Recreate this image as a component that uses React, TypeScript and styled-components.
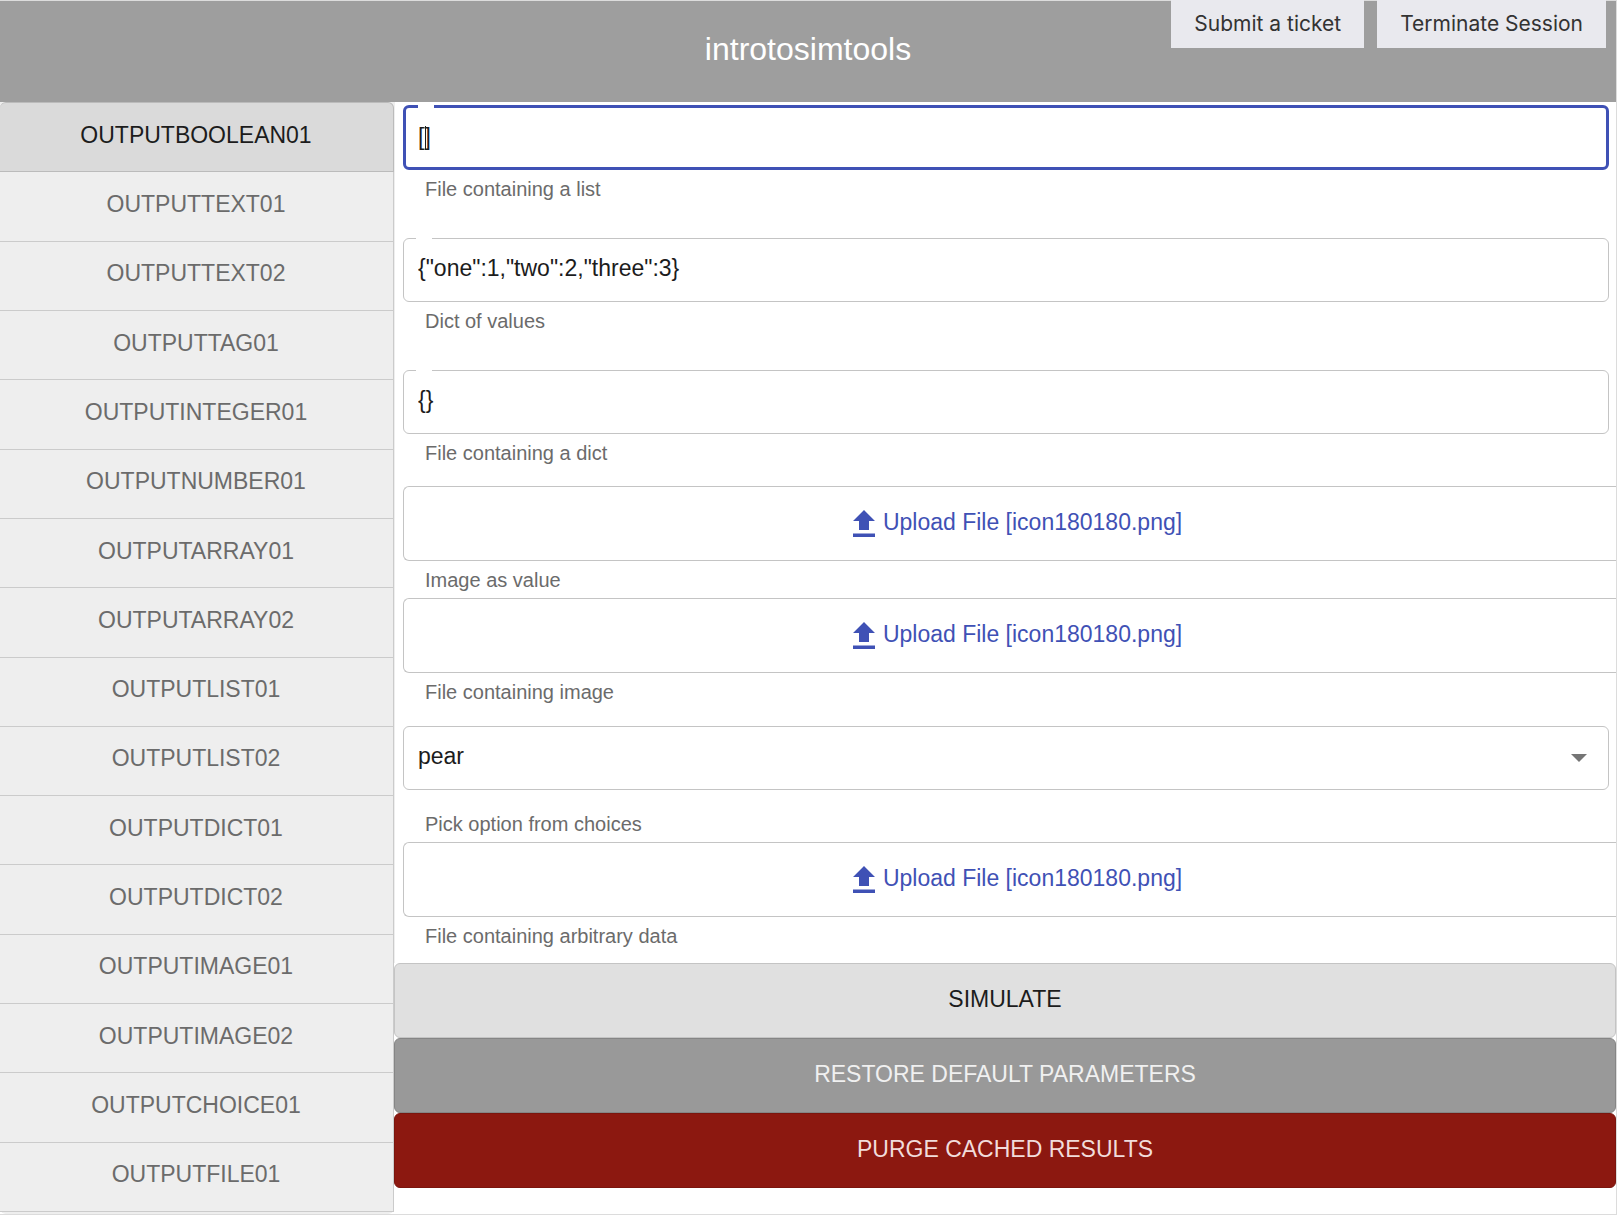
import React, { useState } from "react";
import styled, { createGlobalStyle, css } from "styled-components";

const GlobalStyle = createGlobalStyle`
  *, *::before, *::after { box-sizing: border-box; }
  body {
    margin: 0;
    background: #fff;
    color: #212121;
    font-family: "Liberation Sans", Arial, sans-serif;
    font-size: 23px;
  }
  button, input, select { font: inherit; color: inherit; }
`;

const Page = styled.div`
  width: calc(100% - 7px);
  border: solid #dcdcdc;
  border-width: 1px 1px 1px 0;
`;

const Header = styled.header`
  display: flex;
  justify-content: center;
  position: relative;
  padding: 27px 0 31px;
  background: #9e9e9e;
`;

const Title = styled.h1`
  margin: 0;
  color: #fff;
  font-family: "Liberation Sans", Arial, sans-serif;
  font-size: 32px;
  font-weight: 400;
  line-height: 43px;
`;

/* Session actions hang over the top edge of the header. */
const SessionBar = styled.nav`
  display: flex;
  gap: 13px;
  position: absolute;
  top: -1px;
  right: 10px;
`;

const SessionButton = styled.button`
  padding: 0 23px;
  border: 0;
  background: #e9e9ee;
  color: #333;
  font-family: Inter, sans-serif;
  font-size: 21px;
  line-height: 48px;
  cursor: pointer;
`;

const Body = styled.div`
  display: grid;
  grid-template-columns: 394px minmax(0, 1fr);
`;

const Sidebar = styled.aside`
  display: flex;
  flex-direction: column;
  padding-bottom: 2px;
  border-radius: 0 0 6px 6px;
  background: #eee;
`;

const OutputTab = styled.button<{ $active: boolean }>`
  flex: 1 1 0;
  padding: 0 1px 4px 0;
  border: solid #cbcbcb;
  border-width: 0 1px 1px 0;
  background: #eee;
  color: #6b6b6b;
  text-align: center;
  cursor: pointer;
  ${(p) =>
    p.$active &&
    css`
      border-color: #bbb;
      border-top-width: 1px;
      border-radius: 6px 6px 0 0;
      background: #dadada;
      color: #1c1c1c;
    `}
`;

const Main = styled.main`
  display: flex;
  flex-direction: column;
  padding-bottom: 26px;
`;

const Form = styled.form`
  display: flex;
  flex-direction: column;
  padding: 3px 0 10px 8px;
  border-left: 1px solid #eee;
`;

const Field = styled.div<{ $after: number }>`
  display: flex;
  flex-direction: column;
  margin-bottom: ${(p) => p.$after}px;
`;

const frame = css<{ $focused?: boolean }>`
  border: ${(p) => (p.$focused ? "3px solid #3f51b5" : "1px solid #c4c4c4")};
  border-radius: 6px;
`;

const Outline = styled.div<{ $focused?: boolean }>`
  ${frame}
  position: relative;
  display: flex;
  height: ${(p) => (p.$focused ? 65 : 64)}px;
  margin-right: 7px;
`;

/* Gap in the top border where an outlined field's label would sit. */
const Notch = styled.span<{ $focused?: boolean }>`
  position: absolute;
  top: ${(p) => (p.$focused ? -3 : -1)}px;
  left: 12px;
  width: 16px;
  height: 3px;
  background: #fff;
`;

/* Thin insertion bar between the brackets of the focused field. */
const InsertionBar = styled.span`
  position: absolute;
  top: 18px;
  left: 19px;
  width: 1px;
  height: 24px;
  background: #1c1c1c;
  pointer-events: none;
`;

const textControl = css`
  flex: 1;
  width: 100%;
  border: 0;
  outline: 0;
  background: transparent;
  color: #1c1c1c;
`;

const TextInput = styled.input<{ $focused?: boolean }>`
  ${textControl}
  padding: ${(p) => (p.$focused ? "0 12px" : "0 14px 4px")};
  caret-color: ${(p) => (p.$focused ? "transparent" : "auto")};
`;

const Select = styled.select`
  ${textControl}
  appearance: none;
  padding: 0 46px 4px 14px;
`;

const DropArrow = styled.svg`
  position: absolute;
  top: 27px;
  right: 21px;
  width: 16px;
  height: 9px;
  fill: #757575;
  pointer-events: none;
`;

const Caption = styled.label<{ $gap?: number }>`
  padding-left: 22px;
  margin-top: ${(p) => p.$gap ?? 7}px;
  color: #6b6b6b;
  font-size: 20px;
  line-height: 24px;
`;

const UploadButton = styled.button`
  ${frame}
  display: flex;
  align-items: center;
  justify-content: center;
  gap: 7px;
  height: 75px;
  padding: 0 0 3px 14px;
  border-right: 0;
  border-top-right-radius: 0;
  border-bottom-right-radius: 0;
  background: #fff;
  color: #3f51b5;
  cursor: pointer;

  svg {
    width: 24px;
    height: 27px;
    margin-top: 2px;
    fill: currentColor;
  }
`;

const tones = {
  light: { bg: "#e0e0e0", edge: "#c4c4c4", text: "#1c1c1c" },
  grey: { bg: "#999", edge: "#858585", text: "#f0f0f0" },
  red: { bg: "#8c1810", edge: "#7b150e", text: "#f1dcdb" },
};

const ActionButton = styled.button<{ $tone: keyof typeof tones }>`
  height: 75px;
  padding: 0 0 2px;
  border: 1px solid ${(p) => tones[p.$tone].edge};
  border-radius: 6px;
  background: ${(p) => tones[p.$tone].bg};
  color: ${(p) => tones[p.$tone].text};
  cursor: pointer;
`;

const OUTPUTS = [
  "OUTPUTBOOLEAN01", "OUTPUTTEXT01", "OUTPUTTEXT02", "OUTPUTTAG01",
  "OUTPUTINTEGER01", "OUTPUTNUMBER01", "OUTPUTARRAY01", "OUTPUTARRAY02",
  "OUTPUTLIST01", "OUTPUTLIST02", "OUTPUTDICT01", "OUTPUTDICT02",
  "OUTPUTIMAGE01", "OUTPUTIMAGE02", "OUTPUTCHOICE01", "OUTPUTFILE01",
];

type TextFieldProps = {
  id: string;
  caption: string;
  value: string;
  after: number;
  focused?: boolean;
};

function TextField({ id, caption, value, after, focused }: TextFieldProps) {
  return (
    <Field $after={after}>
      <Outline $focused={focused}>
        <Notch $focused={focused} />
        <TextInput id={id} defaultValue={value} $focused={focused} />
        {focused && <InsertionBar />}
      </Outline>
      <Caption htmlFor={id}>{caption}</Caption>
    </Field>
  );
}

function UploadField({ id, caption, after }: { id: string; caption: string; after: number }) {
  return (
    <Field $after={after}>
      <UploadButton id={id} type="button">
        <svg viewBox="0 0 24 27" aria-hidden="true">
          <path d="M12 0 23 11H17V20H7V11H1zM1 23.5H23V27H1z" />
        </svg>
        Upload File [icon180180.png]
      </UploadButton>
      <Caption htmlFor={id}>{caption}</Caption>
    </Field>
  );
}

export default function App() {
  const [active, setActive] = useState(OUTPUTS[0]);

  return (
    <>
      <GlobalStyle />
      <Page>
        <Header>
          <Title>introtosimtools</Title>
          <SessionBar>
            <SessionButton>Submit a ticket</SessionButton>
            <SessionButton>Terminate Session</SessionButton>
          </SessionBar>
        </Header>
        <Body>
          <Sidebar>
            {OUTPUTS.map((name) => (
              <OutputTab key={name} $active={name === active} onClick={() => setActive(name)}>
                {name}
              </OutputTab>
            ))}
          </Sidebar>
          <Main>
            <Form>
              <TextField id="list-file" caption="File containing a list" value="[]" after={37} focused />
              <TextField id="dict" caption="Dict of values" value={'{"one":1,"two":2,"three":3}'} after={37} />
              <TextField id="dict-file" caption="File containing a dict" value="{}" after={21} />
              <UploadField id="image" caption="Image as value" after={6} />
              <UploadField id="image-file" caption="File containing image" after={22} />
              <Field $after={6}>
                <Outline>
                  <Select id="choice" defaultValue="pear">
                    <option>apple</option>
                    <option>pear</option>
                    <option>banana</option>
                  </Select>
                  <DropArrow viewBox="0 0 16 9" aria-hidden="true">
                    <path d="M0 0H16L8 8z" />
                  </DropArrow>
                </Outline>
                <Caption htmlFor="choice" $gap={22}>Pick option from choices</Caption>
              </Field>
              <UploadField id="data-file" caption="File containing arbitrary data" after={5} />
            </Form>
            <ActionButton $tone="light">SIMULATE</ActionButton>
            <ActionButton $tone="grey">RESTORE DEFAULT PARAMETERS</ActionButton>
            <ActionButton $tone="red">PURGE CACHED RESULTS</ActionButton>
          </Main>
        </Body>
      </Page>
    </>
  );
}
